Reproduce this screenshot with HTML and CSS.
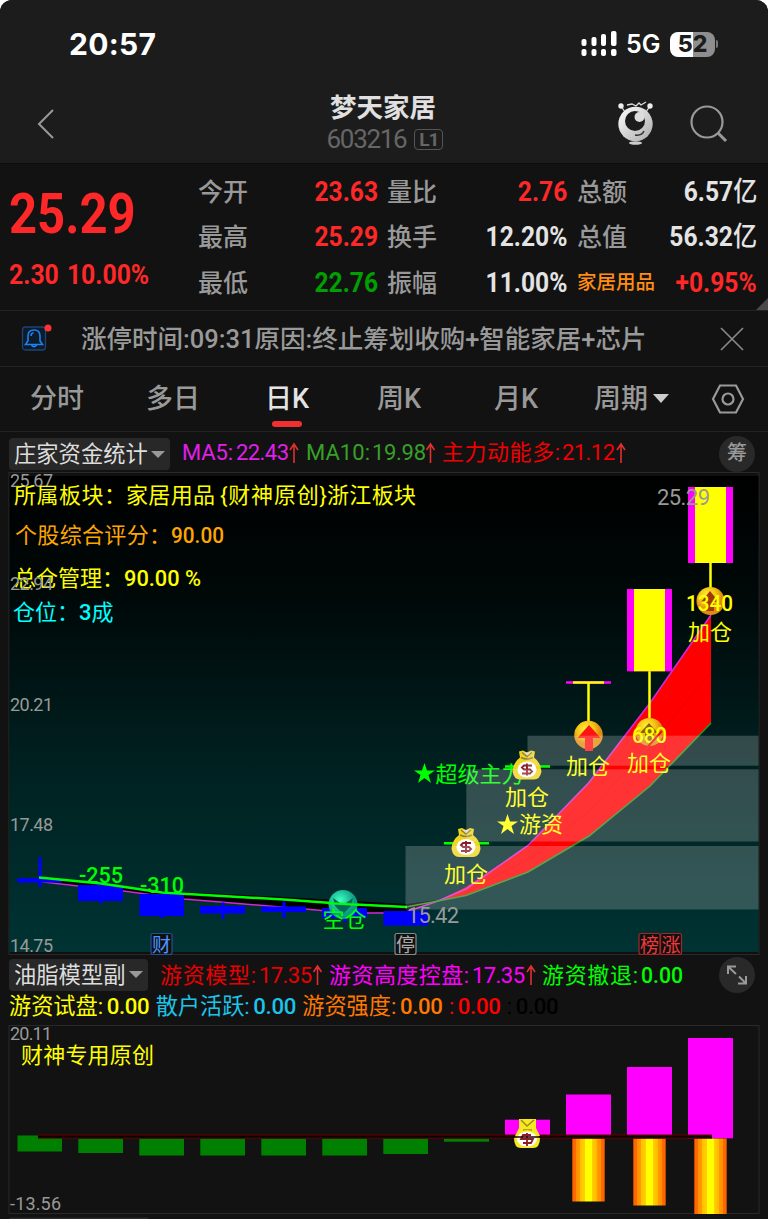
FILE: index.html
```html
<!DOCTYPE html>
<html lang="zh-CN">
<head>
    <meta charset="UTF-8">
    <meta name="viewport" content="width=device-width, initial-scale=1.0">
    <title>梦天家居 603216</title>
    <link rel="stylesheet" href="styles.css">
</head>
<body>
<div class="phone">
    <!-- 状态栏 -->
    <div class="status">
        <span class="time">20:57</span>
        <div class="status-right">
            <svg width="36" height="26" viewBox="0 0 36 26" fill="#fff">
                <rect x="0.500" y="8" width="5" height="7" rx="2"/><rect x="10.500" y="6" width="5" height="9" rx="2"/>
                <rect x="20" y="3" width="5" height="12" rx="2"/><rect x="30" y="0" width="5.500" height="15" rx="2"/>
                <rect x="0.500" y="18" width="5" height="7" rx="2"/><rect x="10.500" y="18" width="5" height="7" rx="2"/>
                <rect x="20" y="18" width="5" height="7" rx="2"/><rect x="30" y="18" width="5.500" height="7" rx="2"/>
            </svg>
            <span class="net">5G</span>
            <div class="battery">52</div>
            <span class="battery-cap"></span>
        </div>
    </div>

    <!-- 标题 -->
    <div class="navbar">
        <svg class="back" width="20" height="32" viewBox="0 0 20 32"><path d="M17 2L3 16L17 30" fill="none" stroke="#999" stroke-width="2"/></svg>
        <div class="title">
            <h1>梦天家居</h1>
            <div class="code"><span>603216</span><b>L1</b></div>
        </div>
        <svg class="mascot" width="38" height="46" viewBox="0 0 38 46">
            <defs><linearGradient id="ball" x2="1" y2="1"><stop offset="0" stop-color="#fff"/><stop offset="1" stop-color="#aaa"/></linearGradient></defs>
            <path d="M4 5L8 11M33 5L29 11M10 4L15 3L19 5L22 2L24 4L29 1" fill="none" stroke="#ddd" stroke-width="1.300"/>
            <circle cx="4" cy="5" r="2.700" fill="#eee"/><circle cx="33" cy="5" r="2.700" fill="#eee"/>
            <circle cx="18.500" cy="23" r="17.200" fill="url(#ball)"/>
            <circle cx="18" cy="20" r="10" fill="#1c1c1c"/>
            <circle cx="22.500" cy="16" r="5" fill="#ddd"/>
            <path d="M18 34Q25 35 27 30" fill="none" stroke="#333" stroke-width="1.500"/>
            <ellipse cx="18.500" cy="42" rx="6.500" ry="1.700" fill="#ccc"/>
        </svg>
        <svg class="search" width="38" height="38" viewBox="0 0 38 38" fill="none" stroke="#999" stroke-width="2.200"><circle cx="17" cy="17" r="15.500"/><path d="M28 28L36 36" stroke-width="3"/></svg>
    </div>

    <!-- 行情 -->
    <div class="quote">
        <div class="price red">
            <div class="now">25.29</div>
            <div class="change"><span>2.30</span><span>10.00%</span></div>
        </div>
        <div class="col col1">
            <div><label>今开</label><span class="num red">23.63</span></div>
            <div><label>最高</label><span class="num red">25.29</span></div>
            <div><label>最低</label><span class="num green">22.76</span></div>
        </div>
        <div class="col col2">
            <div><label>量比</label><span class="num red">2.76</span></div>
            <div><label>换手</label><span class="num">12.20%</span></div>
            <div><label>振幅</label><span class="num">11.00%</span></div>
        </div>
        <div class="col col3">
            <div><label>总额</label><span class="num">6.57<em>亿</em></span></div>
            <div><label>总值</label><span class="num">56.32<em>亿</em></span></div>
            <div><label class="industry">家居用品</label><span class="num red">+0.95%</span></div>
        </div>
        <i class="corner"></i>
    </div>

    <!-- 公告 -->
    <div class="notice">
        <svg width="32" height="32" viewBox="0 0 32 32">
            <rect x="1.500" y="7" width="23" height="23" rx="3" fill="#0d1b2a" stroke="#1d4474" stroke-width="1.300"/>
            <path d="M4.500 24.500H21.500L19 21V16Q19 10 13 10Q7 10 7 16V21ZM10.500 25Q13 28.500 15.500 25M10 16Q10 13 12.500 12.700" fill="none" stroke="#1b83ee" stroke-width="1.600"/>
            <circle cx="27" cy="8" r="3.500" fill="#f33"/>
        </svg>
        <span class="notice-text">涨停时间:09:31原因:终止筹划收购+智能家居+芯片</span>
        <svg class="close" width="26" height="26" viewBox="0 0 26 26" stroke="#888" stroke-width="1.700"><path d="M2 2L24 24M24 2L2 24"/></svg>
    </div>

    <!-- 周期 -->
    <div class="tabs">
        <span class="tab t1">分时</span>
        <span class="tab t2">多日</span>
        <span class="tab t3 active">日K</span>
        <span class="tab t4">周K</span>
        <span class="tab t5">月K</span>
        <span class="tab t6">周期<i class="arrow"></i></span>
        <svg class="setting" width="34" height="30" viewBox="0 0 34 30" fill="none" stroke="#999" stroke-width="2.200"><path d="M9 1.500H25L32 15L25 28.500H9L2 15Z"/><circle cx="17" cy="15" r="5.500"/></svg>
    </div>

    <!-- 主图指标 -->
    <div class="legend main-legend">
        <span class="picker"><span>庄家资金统计</span><i class="arrow"></i></span>
        <svg class="values" width="460" height="32" viewBox="177 438 460 32">
            <text x="182" y="460" fill="#e020e8" textLength="51">MA5:</text>
            <text x="236" y="460" fill="#e020e8" textLength="53">22.43</text>
            <text x="306" y="460" fill="#38a028" textLength="64">MA10:</text>
            <text x="372" y="460" fill="#38a028" textLength="54">19.98</text>
            <text x="442" y="460" fill="#f00000" textLength="118">主力动能多:</text>
            <text x="562" y="460" fill="#f00000" textLength="53">21.12</text>
            <path class="up" d="M294 463V444M290 450L294 444L298 450M430.500 463V444M426.500 450L430.500 444L434.500 450M621 463V444M617 450L621 444L625 450"/>
        </svg>
        <span class="round">筹</span>
    </div>

    <!-- K线主图 -->
    <svg class="chart" width="768" height="484" viewBox="0 472 768 484">
        <defs>
            <linearGradient id="sky" x2="0" y2="1"><stop offset="0" stop-color="#000"/><stop offset=".25" stop-color="#000808"/><stop offset=".6" stop-color="#002020"/><stop offset="1" stop-color="#003333"/></linearGradient>
            <radialGradient id="gold" cx=".4" cy=".3"><stop offset="0" stop-color="#fff33a"/><stop offset=".6" stop-color="#f4c414"/><stop offset="1" stop-color="#e08c10"/></radialGradient>
            <radialGradient id="teal" cx=".4" cy=".35"><stop offset="0" stop-color="#3fffc0"/><stop offset="1" stop-color="#0a9c80"/></radialGradient>
            <g id="bag">
                <path d="M-8 -14L-4 -15L0 -13L4 -15L8 -14L7 -8Q14 -3 14.500 6Q13 14 7 14H-7Q-13 14 -14.500 6Q-14 -3 -7 -8Z" fill="#f0d420"/>
                <path d="M-5 -13L0 -9L5 -13M-6 -8Q0 -5 6 -8" fill="none" stroke="#8c8040" stroke-width="1.500"/>
                <path d="M-3 -13H3L0 -10Z" fill="#ddd"/>
                <ellipse cy="4" rx="9.500" ry="8" fill="#fff"/>
                <path d="M5 0H-3L-5 2L-3 4H3L5 6L3 8H-5M0 -2V10" fill="none" stroke="#8c1c28" stroke-width="1.900"/>
            </g>
        </defs>
        <rect x="9" y="472.500" width="750" height="482" fill="#101010" stroke="#292929"/>
        <rect x="9.500" y="476" width="749" height="476" fill="url(#sky)"/>

        <!-- 坐标 -->
        <g class="axis">
            <text x="10" y="487" textLength="43">25.67</text>
            <text x="10" y="711" textLength="43">20.21</text>
            <text x="10" y="831" textLength="43">17.48</text>
            <text x="10" y="952" textLength="43">14.75</text>
        </g>

        <!-- 均线 -->
        <path d="M39 877L162 891L284 897L406 904L438 900L406 912L350 913L305 909L184 899L39 882Z" fill="#000"/>
        <path d="M438 901L466 887L528 845.500L589 782.500L650 703L711 615V723L650 786L589 836L528 872L466 895.500Z" fill="#f00"/>
        <path d="M39 881.500L78 886L123 891L184 899L305 909L350 913H384L406 912L438 901L466 889L528 845.500L589 782.500L650 703L711 615" fill="none" stroke="#d028d8" stroke-width="1.600"/>
        <path d="M406 907L438 901L466 895.500L528 872L589 836L650 786L711 723" fill="none" stroke="#309020" stroke-width="1.600"/>
        <path d="M466 892L528 859L589 811L650 745L711 672" fill="none" stroke="#ec0000" stroke-width="1"/>

        <!-- K线 -->
        <path d="M17.500 878.300H62V882.600H17.500ZM38.500 857H41.500V887H38.500ZM78 885H123V901H78ZM99.500 900H102.500V903.500H99.500ZM139.500 894H184V916H139.500ZM160.500 915H163.500V918H160.500ZM200 906H245V913.500H200ZM221.500 902.500H224.500V919H221.500ZM261.500 906.500H306V912H261.500ZM282.500 901.500H285.500V918H282.500ZM322 908H367V918H322ZM343.500 917H346.500V922H343.500ZM383.500 911H428V925.500H383.500Z" fill="#00f"/>
        <path d="M39 877.500L101 883.500L162 892.500L284 899.500L345 904L407 907" fill="none" stroke="#0f0" stroke-width="2.500"/>
        <path d="M444 843.300H489M505 766.500H550" stroke="#0f0" stroke-width="2.500"/>
        <path d="M566 682.500H611" stroke="#f0f" stroke-width="2.500"/>
        <path d="M573 682.500H604M588.500 682V722M649.500 671V718M710.500 563V588" stroke="#ff0" stroke-width="2.500"/>
        <rect x="627" y="589" width="45" height="82.300" fill="#f0f"/><rect x="634" y="589" width="31" height="82.300" fill="#ff0"/>
        <rect x="688" y="487" width="45" height="76" fill="#f0f"/><rect x="695" y="487" width="31" height="76" fill="#ff0"/>

        <!-- 图标 -->
        <circle cx="343" cy="904.500" r="14.500" fill="url(#teal)"/>
        <path d="M333 898L340 903H346L353 898L351 906L343 914L335 906Z" fill="#04685c"/>
        <path d="M328 903.200L359 904.800" stroke="#0f0" stroke-width="2.300"/>
        <use href="#bag" x="466" y="843"/>
        <circle cx="588.500" cy="735" r="14.300" fill="url(#gold)"/>
        <path d="M589 725L600.500 738H593V751H585V738H577.500Z" fill="#ff1414"/>
        <circle cx="649.500" cy="732" r="14" fill="url(#gold)"/>
        <path d="M649 723L658 733H654V742H645V733H640Z" fill="#906008"/>
        <circle cx="710.500" cy="601" r="14" fill="url(#gold)"/>
        <path d="M710 591L719 602H714V611H706V602H701Z" fill="#a03808"/>

        <!-- 文字标注 -->
        <g class="mark" fill="#ff0">
            <text x="444" y="882" textLength="44">加仓</text>
            <text x="505" y="805" textLength="44">加仓</text>
            <text x="566" y="774" textLength="44">加仓</text>
            <text x="627" y="771" textLength="44">加仓</text>
            <text x="688" y="640" textLength="44">加仓</text>
            <text class="value" x="632" y="743" textLength="35" lengthAdjust="spacingAndGlyphs">680</text>
            <text class="value" x="686" y="611" textLength="47" lengthAdjust="spacingAndGlyphs">1340</text>
            <path d="M507.500 814L510 821.500H518L511.500 826L514 834L507.500 829L501 834L503.500 826L497 821.500H505Z"/>
            <text x="519" y="832" textLength="44">游资</text>
        </g>
        <path d="M634 762L662 731" stroke="#e81010" stroke-width="2"/>
        <g class="mark" fill="#0f0">
            <path d="M424.500 763L427 770.500H435L428.500 775L431 783L424.500 778L418 783L420.500 775L414 770.500H422Z"/>
            <text x="435.500" y="782" textLength="88">超级主力</text>
            <text class="value" x="79" y="883" textLength="44" lengthAdjust="spacingAndGlyphs">-255</text>
            <text class="value" x="140" y="893" textLength="44" lengthAdjust="spacingAndGlyphs">-310</text>
            <text x="322.500" y="927" textLength="44">空仓</text>
        </g>
        <use href="#bag" x="527" y="765.500"/>

        <g fill="#fff" fill-opacity=".2">
            <rect x="527.500" y="735.700" width="231" height="30"/>
            <rect x="466.300" y="769.300" width="292.200" height="72.200"/>
            <rect x="405.500" y="846" width="353" height="63.500"/>
        </g>
        <g class="extreme">
            <text x="407" y="923" textLength="52">15.42</text>
            <text x="657" y="505" textLength="53">25.29</text>
        </g>

        <g class="mark" fill="#ff0">
            <text x="14" y="503" textLength="112">所属板块：</text>
            <text x="126" y="503" textLength="89">家居用品</text>
            <text x="220" y="503" textLength="107">{财神原创}</text>
            <text x="327" y="503" textLength="89">浙江板块</text>
            <text x="14" y="586" textLength="110">总仓管理：</text>
            <text class="value" x="124" y="586" textLength="77" lengthAdjust="spacingAndGlyphs">90.00 %</text>
        </g>
        <g class="mark" fill="#ffa500">
            <text x="15" y="543" textLength="156">个股综合评分：</text>
            <text class="value" x="171" y="543" textLength="53" lengthAdjust="spacingAndGlyphs">90.00</text>
        </g>
        <g class="mark" fill="#0ff">
            <text x="13" y="620" textLength="66">仓位：</text>
            <text x="79" y="620"><tspan class="value">3</tspan>成</text>
        </g>
        <g class="axis"><text x="10" y="590" textLength="43">22.94</text></g>

        <!-- 事件 -->
        <g class="event">
            <rect x="151" y="933.500" width="21" height="21" rx="2" stroke="#285090"/><text x="152" y="951.500" fill="#4c94ff">财</text>
            <rect x="395" y="933.500" width="21" height="21" rx="2" stroke="#888"/><text x="396" y="951.500" fill="#aaa">停</text>
            <rect x="639" y="933.500" width="21" height="21" rx="2" stroke="#a02828"/><text x="640" y="951.500" fill="#f03838">榜</text>
            <rect x="660.500" y="933.500" width="21" height="21" rx="2" stroke="#a02828"/><text x="661.500" y="951.500" fill="#f03838">涨</text>
        </g>
    </svg>

    <!-- 副图指标 -->
    <div class="legend sub-legend">
        <span class="picker"><span>油脂模型副</span><i class="arrow"></i></span>
        <svg class="values" width="550" height="32" viewBox="155 959 550 32">
            <text x="160" y="983" fill="#e80000" textLength="96">游资模型:</text>
            <text x="259" y="983" fill="#e80000" textLength="53">17.35</text>
            <text x="329" y="983" fill="#f0f" textLength="140">游资高度控盘:</text>
            <text x="472" y="983" fill="#f0f" textLength="53">17.35</text>
            <text x="542" y="983" fill="#0f0" textLength="96">游资撤退:</text>
            <text class="value" x="641" y="983" fill="#0f0" textLength="42" lengthAdjust="spacingAndGlyphs">0.00</text>
            <path class="up" d="M317.500 985V966M313.500 972L317.500 966L321.500 972M531 985V966M527 972L531 966L535 972"/>
        </svg>
        <svg class="round" width="36" height="36" viewBox="0 0 36 36"><path d="M9 17V9.500H17M9.500 10L17 17M27 19V26.500H19M26.500 26L20 19.500" fill="none" stroke="#999" stroke-width="2"/></svg>
    </div>
    <div class="legend-row">
        <span class="yellow">游资试盘:<b>0.00</b></span>
        <span class="cyan">散户活跃:<b>0.00</b></span>
        <span class="orange">游资强度:<b>0.00</b></span>
        <span class="pure-red">:<b>0.00</b></span>
        <span class="black">:<b>0.00</b></span>
    </div>

    <!-- 副图 -->
    <svg class="chart" width="768" height="197" viewBox="0 1022 768 197">
        <defs>
            <linearGradient id="fire">
                <stop offset="0" stop-color="#ff6000"/><stop offset=".12" stop-color="#ff6c00"/>
                <stop offset=".12" stop-color="#ff9000"/><stop offset=".25" stop-color="#ff9c00"/>
                <stop offset=".25" stop-color="#ffc000"/><stop offset=".38" stop-color="#ffd000"/>
                <stop offset=".38" stop-color="#ff0"/><stop offset=".62" stop-color="#ff0"/>
                <stop offset=".62" stop-color="#ffd000"/><stop offset=".75" stop-color="#ffb800"/>
                <stop offset=".75" stop-color="#ff9c00"/><stop offset=".88" stop-color="#ff9000"/>
                <stop offset=".88" stop-color="#ff6c00"/><stop offset="1" stop-color="#ff6000"/>
            </linearGradient>
        </defs>
        <rect x="9" y="1025.500" width="750" height="188" fill="none" stroke="#292929"/>
        <g class="axis">
            <text x="10" y="1040" textLength="42">20.11</text>
            <text x="10" y="1210" textLength="51">-13.56</text>
        </g>
        <g class="mark" fill="#ff0"><text x="21" y="1063" textLength="133">财神专用原创</text></g>
        <path d="M17.500 1135.500H62V1151.500H17.500ZM78.300 1138.700H123V1153H78.300ZM139.300 1138.700H184V1155.500H139.300ZM200.300 1138.700H245V1155.500H200.300ZM261.300 1138.700H306V1155.500H261.300ZM322.300 1138.700H367V1155.500H322.300ZM383.300 1138.700H428V1154H383.300ZM444 1138.700H489V1141.700H444Z" fill="#008000"/>
        <rect x="505" y="1119.700" width="45" height="16" fill="#f0f"/>
        <rect x="566" y="1094.500" width="45" height="41" fill="#f0f"/>
        <rect x="627" y="1067" width="45" height="68.500" fill="#f0f"/>
        <rect x="688" y="1038" width="45" height="100.300" fill="#f0f"/>
        <rect x="572.300" y="1138.500" width="32.400" height="63" fill="url(#fire)"/>
        <rect x="633.300" y="1138.500" width="32.400" height="67" fill="url(#fire)"/>
        <rect x="694.300" y="1138.500" width="32.400" height="75.500" fill="url(#fire)"/>
        <rect x="38" y="1134.500" width="674" height="4.200" fill="#600"/>
        <rect x="38" y="1135.600" width="674" height="2" fill="#000"/>
        <path d="M519 1119H536V1128H519Z" fill="#f8e820"/>
        <path d="M519 1128H536L540 1136H515Z" fill="#f8e820"/>
        <path d="M521 1120L527 1126L534 1120M523 1130H532" fill="none" stroke="#9c8c20" stroke-width="1.500"/>
        <path d="M514 1138Q527 1122 540 1138Q540 1148 533 1148H521Q514 1148 514 1138Z" fill="#f8e820"/>
        <ellipse cx="527" cy="1139" rx="10" ry="7.500" fill="#fff"/>
        <path d="M531 1135H523L521 1139H533L531 1143H523M527 1133V1146" fill="none" stroke="#8c1c28" stroke-width="1.800"/>
        <path d="M505 1137H550" stroke="#200" stroke-width="1.400"/>
        <rect x="9" y="1217.500" width="140" height="4" rx="2" fill="#292929"/>
    </svg>
</div>
</body>
</html>
```
FILE: styles.css
```css
body {
    margin: 0;
    background: #fff;
    font-family: Roboto, "Noto Sans CJK SC", sans-serif;
}

.phone {
    width: 768px;
    height: 1219px;
    overflow: hidden;
    background: #121212;
    border-radius: 12px 12px 0 0;
}

svg {
    display: block;
    flex: none;
}

.chart {
    overflow: visible;
}

/* 状态栏 */
.status {
    height: 88px;
    box-sizing: border-box;
    padding: 0 53px 0 69px;
    display: flex;
    align-items: center;
    justify-content: space-between;
    background: #1c1c1c;
    color: #fff;
    font-family: Inter, sans-serif;
}

.time {
    font-size: 30px;
    font-weight: 700;
    letter-spacing: 0.3px;
}

.status-right {
    display: flex;
    align-items: center;
}

.net {
    width: 53px;
    padding-left: 9px;
    box-sizing: border-box;
    font-size: 25px;
    font-weight: 600;
    line-height: 26px;
}

.battery {
    width: 45px;
    height: 25px;
    border-radius: 8px;
    background: linear-gradient(90deg, #fff 52%, #8e8e8e 52%);
    color: #1c1c1c;
    font-size: 23px;
    line-height: 25px;
    font-weight: 800;
    text-align: center;
}

.battery-cap {
    width: 2px;
    height: 8px;
    margin: 0 -3px 0 1px;
    border-radius: 0 3px 3px 0;
    background: #777;
}

/* 标题 */
.navbar {
    height: 75px;
    display: grid;
    grid-template-columns: 226px 314px 78px 72px 78px;
    background: #1c1c1c;
    border-bottom: 1px solid #0c0c0c;
}

.back {
    margin: 20px 0 0 36px;
}

.title {
    text-align: center;
}

h1 {
    margin: 2px 0 0;
    font-size: 26.5px;
    line-height: 36px;
    font-weight: 700;
    color: #e0e0e0;
}

.code {
    display: flex;
    justify-content: center;
    align-items: center;
    gap: 8px;
    padding-left: 4px;
    color: #666;
    font-size: 26px;
    line-height: 27px;
}

.code span {
    letter-spacing: -1.3px;
}

.code b {
    width: 27px;
    height: 19px;
    border: 1.5px solid #555;
    border-radius: 4px;
    font-size: 19px;
    line-height: 20px;
    letter-spacing: -1px;
}

.mascot {
    grid-column: 4;
    margin: 13px 0 0 -1px;
}

.search {
    margin: 17px 0 0;
}

/* 行情 */
.quote {
    position: relative;
    height: 146px;
    display: flex;
    border-bottom: 1px solid #232323;
}

.red { color: #ff2828; }
.green { color: #00a000; }

.price {
    width: 198px;
    padding-left: 9px;
    box-sizing: border-box;
    font-weight: 700;
}

.now {
    width: 145px;
    margin-top: 18px;
    font-size: 56px;
    line-height: 64px;
    transform: scaleX(.875);
    transform-origin: left;
}

.change {
    display: flex;
    gap: 9px;
    width: 200px;
    margin-top: 13px;
    font-size: 27.5px;
    line-height: 32px;
    transform: scaleX(.9);
    transform-origin: left;
}

.col {
    padding-top: 5px;
    color: #e4e4e4;
}

.col div {
    height: 45.5px;
    display: flex;
    align-items: center;
    justify-content: space-between;
}

.col1 { width: 180px; margin-right: 9px; }
.col2 { width: 180px; margin-right: 10px; }
.col3 { width: 180px; }

.col label {
    padding-bottom: 4px;
    color: #999;
    font-size: 25px;
    font-weight: 500;
    white-space: nowrap;
}

.col .industry {
    color: #ff8c14;
    font-size: 19.5px;
}

.num {
    font-size: 27.5px;
    font-weight: 700;
    line-height: 32px;
    transform: scaleX(.895);
    transform-origin: right;
    white-space: nowrap;
}

.num em {
    font-style: normal;
    font-weight: 500;
    font-size: 27px;
    line-height: 20px;
}

.corner {
    position: absolute;
    right: 0;
    bottom: 0;
    border-left: 12px solid transparent;
    border-bottom: 12px solid #4a4a4a;
}

/* 公告 */
.notice {
    height: 55px;
    display: flex;
    align-items: center;
    padding-left: 21px;
    border-bottom: 1px solid #232323;
    color: #999;
}

.notice svg:first-child {
    margin-top: -5px;
}

.notice-text {
    width: 638px;
    padding: 0 0 4px 28px;
    box-sizing: border-box;
    font-size: 25.5px;
    font-weight: 500;
    white-space: nowrap;
}

.close {
    margin-left: 28px;
}

/* 周期 */
.tabs {
    height: 64px;
    display: flex;
    align-items: center;
    padding-left: 30px;
    border-bottom: 1px solid #232323;
    color: #999;
    font-size: 27px;
    font-weight: 500;
}

.tab {
    position: relative;
    padding-bottom: 5px;
    white-space: nowrap;
}

.t1 { width: 116px; }
.t2 { width: 119px; }
.t3 { width: 112px; }
.t4 { width: 117px; }
.t5 { width: 100px; }
.t6 { width: 117px; display: flex; align-items: center; }

.tab.active {
    color: #e4e4e4;
}

.tab.active::after {
    content: "";
    position: absolute;
    left: 7px;
    bottom: -6px;
    width: 30px;
    height: 6px;
    border-radius: 3px;
    background: #f03030;
}

.arrow {
    border: 7px solid transparent;
    border-top: 7px solid #999;
    border-bottom: 0;
    margin-left: 3px;
}

.tab .arrow {
    border-width: 9px 8px 0;
    border-top-color: #ccc;
    margin: 3px 0 0 5px;
}

/* 指标 */
.legend {
    display: flex;
    align-items: center;
    padding: 0 13px 0 9px;
}

.main-legend {
    height: 42px;
    padding-top: 2px;
    box-sizing: border-box;
    margin-bottom: -2px;
}

.sub-legend {
    height: 37px;
}

.picker {
    height: 32px;
    display: flex;
    align-items: center;
    padding: 0 5px;
    border-radius: 4px;
    background: #282828;
    color: #ddd;
    font-size: 22.3px;
    white-space: nowrap;
}

.picker span {
    padding-bottom: 4px;
}

.values {
    margin-left: 7px;
    overflow: visible;
}

.values text {
    font-size: 22px;
}

.up {
    fill: none;
    stroke: #e03030;
    stroke-width: 1.6;
}

.round {
    width: 36px;
    height: 36px;
    margin-left: auto;
    border-radius: 50%;
    background: #292929;
    color: #999;
    font-size: 20px;
    font-weight: 500;
    line-height: 35px;
    text-align: center;
}

.legend-row {
    height: 29px;
    display: flex;
    padding-left: 9px;
    gap: 7px;
    font-size: 22.2px;
    line-height: 27px;
    white-space: nowrap;
}

.legend-row b {
    display: inline-block;
    width: 42px;
    margin-left: 3.5px;
    font-weight: 500;
    letter-spacing: -0.3px;
}

.yellow { color: #ff0; }
.cyan { color: #1cc4e8; }
.orange { color: #ff7800; }
.pure-red { color: #f00; }
.black { color: #000; }

/* 图表 */
.axis text {
    fill: #999;
    font-size: 18px;
}

.mark text {
    font-size: 22px;
}

.mark .value,
.values .value {
    font-weight: 500;
}

.extreme text {
    fill: #999;
    font-size: 22px;
}

.event rect {
    fill: #101010;
    stroke-width: 1.2;
}

.event text {
    font-size: 19px;
}
```
